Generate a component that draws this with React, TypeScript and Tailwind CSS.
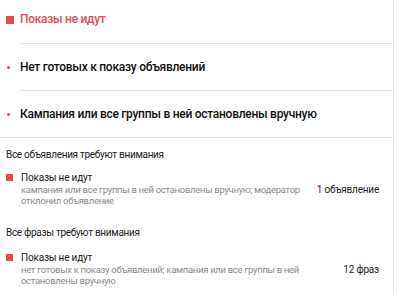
import React from "react";

const font = { fontFamily: "Roboto, 'Noto Sans', sans-serif" };

function Row({ text }: { text: string }) {
  return (
    <div className="flex h-[46px] items-center">
      <div className="w-[20px] flex pl-[7px]">
        <span className="block w-[3px] h-[3px] rounded-full bg-[#e8474c]" />
      </div>
      <span className="text-[12px] font-medium text-[#111] tracking-[-0.27px]">{text}</span>
    </div>
  );
}

function Item({ sub, count, mt }: { sub: string; count: string; mt: string }) {
  return (
    <div className={`flex items-center ${mt}`}>
      <div className="flex items-start">
        <span className="mt-[2px] ml-[6px] w-[7px] h-[7px] bg-[#e8474c]" />
        <div className="ml-[8px] w-[290px]">
          <div className="text-[10px] leading-[12px] text-[#1c1c1c] tracking-[-0.2px]">Показы не идут</div>
          <div className="text-[9.5px] leading-[11px] text-[#8c8c8c] tracking-[-0.3px]">{sub}</div>
        </div>
      </div>
      <div className="ml-auto pr-[14px] text-[10px] text-[#1c1c1c] whitespace-nowrap tracking-[-0.2px]">{count}</div>
    </div>
  );
}

export default function App() {
  return (
    <div className="w-[397px] h-[295px] bg-white overflow-hidden flex" style={font}>
      <div className="w-[393px] flex flex-col">
        <div className="h-[43px] flex items-start pt-[10px]">
          <span className="mt-[6px] ml-[6px] w-[8px] h-[8px] bg-[#e8474c]" />
          <span className="ml-[6px] text-[12px] font-medium text-[#e34a4e] leading-[18px] tracking-[-0.3px]">Показы не идут</span>
        </div>
        <div className="ml-[20px] h-px bg-[#e3e3e3]" />
        <Row text="Нет готовых к показу объявлений" />
        <div className="ml-[20px] h-px bg-[#e3e3e3]" />
        <Row text="Кампания или все группы в ней остановлены вручную" />
        <div className="h-px bg-[#e3e3e3]" />
        <div className="pl-[6px] mt-[10px] text-[10px] leading-[14px] text-[#1c1c1c] tracking-[-0.3px]">Все объявления требуют внимания</div>
        <Item
          mt="mt-[10px]"
          sub="кампания или все группы в ней остановлены вручную; модератор отклонил объявление"
          count="1 объявление"
        />
        <div className="pl-[6px] mt-[20px] text-[10px] leading-[14px] text-[#1c1c1c] tracking-[-0.3px]">Все фразы требуют внимания</div>
        <Item
          mt="mt-[12px]"
          sub="нет готовых к показу объявлений; кампания или все группы в ней остановлены вручную"
          count="12 фраз"
        />
      </div>
      <div className="w-px bg-[#e6e6e6]" />
      <div className="flex-1 bg-white" />
    </div>
  );
}
